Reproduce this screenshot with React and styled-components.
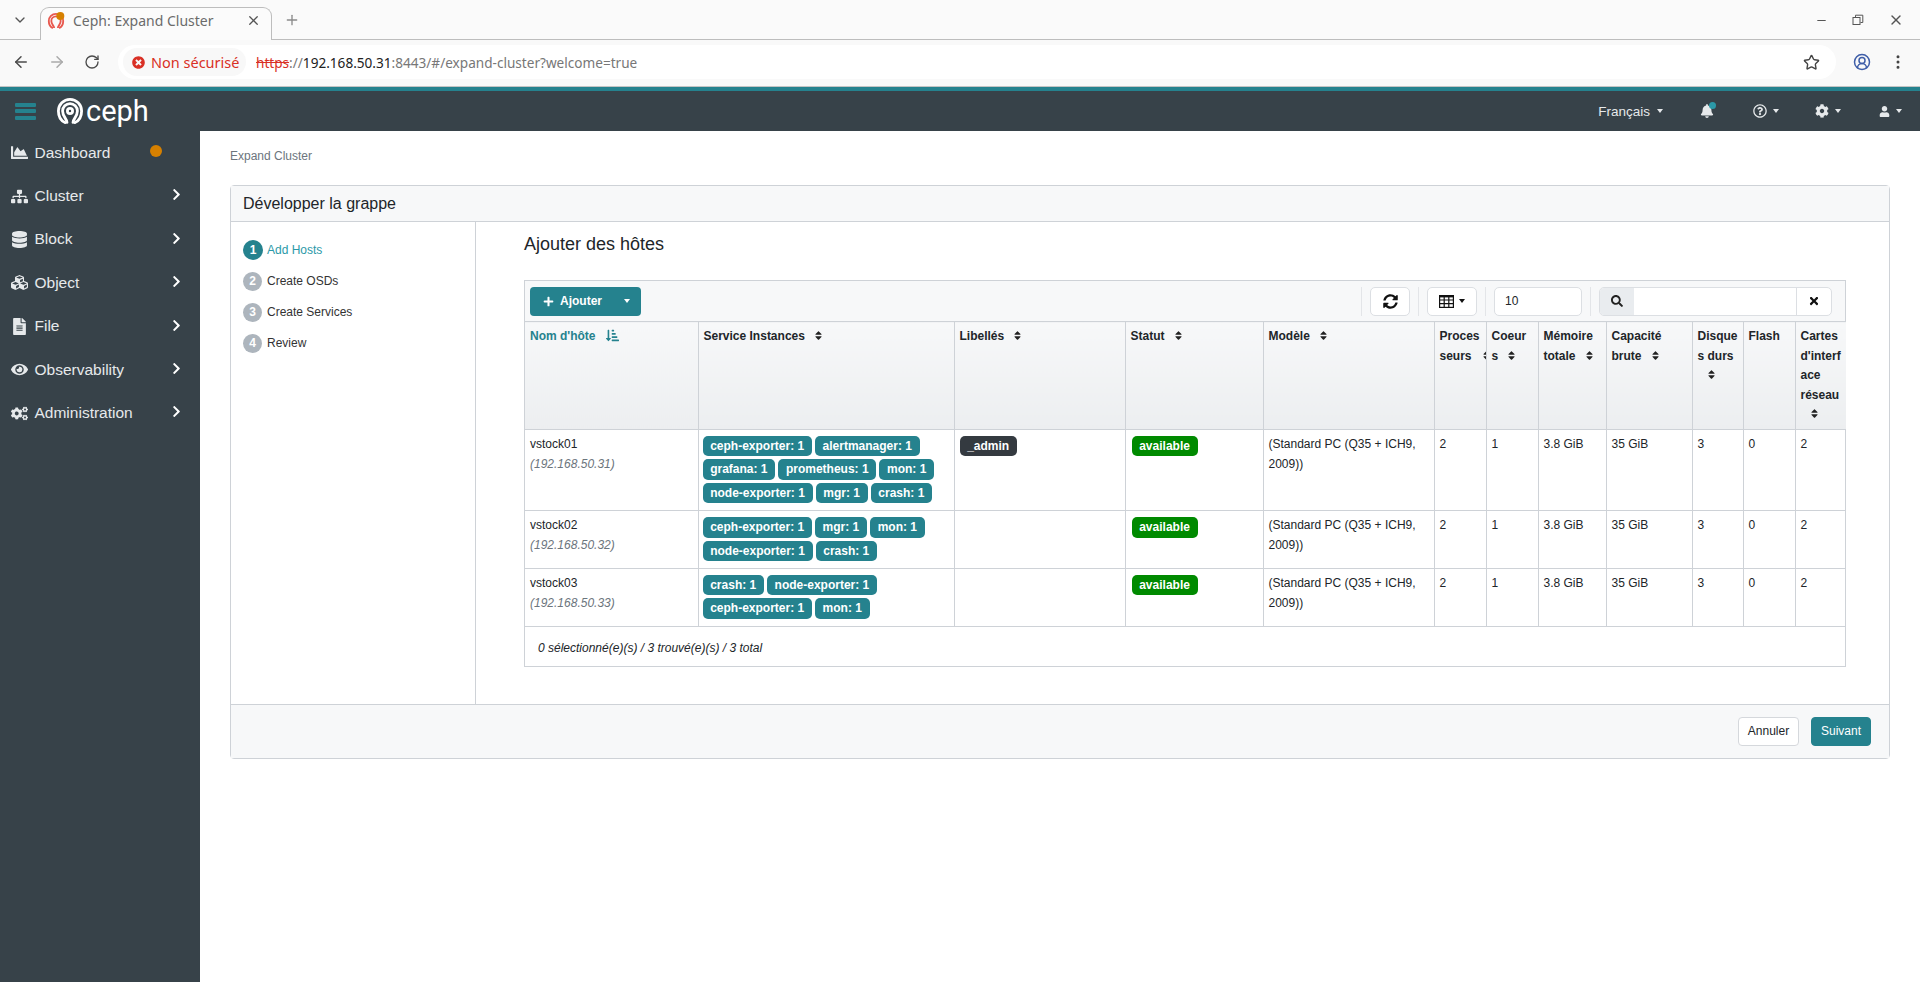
import React from 'react'
import styled, { createGlobalStyle } from 'styled-components'
import {
  FaChartArea, FaSitemap, FaDatabase, FaCubes, FaFileAlt, FaEye, FaCogs, FaChevronRight,
  FaBell, FaRegQuestionCircle, FaCog, FaUser, FaPlus, FaSort, FaSortAmountDownAlt,
  FaSyncAlt, FaSearch, FaTimes, FaTimesCircle,
} from 'react-icons/fa'
import { ArrowLeft, ArrowRight, RotateCw, Star, CircleUserRound, EllipsisVertical, ChevronDown, Plus, X, Minus } from 'lucide-react'

const teal = '#25828e'
const dark = '#374249'
const line = '#ced2d7'

const GlobalStyle = createGlobalStyle`
  html, body { margin: 0; padding: 0; background: #fff; }
  body { font-family: "Liberation Sans", Arial, sans-serif; font-size: 12px; color: #212529; }
  * { box-sizing: border-box; }
`

const Page = styled.div`
  height: 982px;
  display: flex;
  flex-direction: column;
  overflow: hidden;
`

/* browser chrome */
const TabStrip = styled.div`
  height: 39px;
  background: #fafafa;
  display: flex;
  align-items: flex-end;
  padding-left: 40px;
  position: relative;
  font-family: "Noto Sans", sans-serif;
`

const TabListButton = styled.div`
  position: absolute;
  left: 12px;
  top: 12px;
  color: #555;
  display: flex;
`

const Tab = styled.div`
  width: 232px;
  height: 33px;
  margin-bottom: -1px;
  border: 1px solid #bdbdbd;
  border-bottom: none;
  border-radius: 9px 9px 0 0;
  background: #fbfbfb;
  display: flex;
  align-items: center;
  padding: 0 10px 7px 7px;
  font-size: 14px;
  color: #6b6b6b;
  position: relative;
  z-index: 1;
`

const TabTitle = styled.span`
  margin-left: 9px;
  flex: 1;
  white-space: nowrap;
`

const NewTab = styled.div`
  margin: 0 0 11px 12px;
  color: #8a8a8a;
  display: flex;
`

const WindowControls = styled.div`
  margin-left: auto;
  display: flex;
  align-items: center;
  gap: 24px;
  padding: 0 16px 11px 0;
  color: #555;
`

const RestoreIcon = styled.div`
  width: 12px;
  height: 12px;
  display: flex;
`

const UrlBar = styled.div`
  height: 48px;
  background: #f9f9f9;
  border-top: 1px solid #bdbdbd;
  border-bottom: 1px solid #c4c4c4;
  display: flex;
  align-items: center;
  padding: 0 0 2px 12px;
  font-family: "Noto Sans", sans-serif;
`

const NavIcon = styled.div`
  width: 36px;
  height: 24px;
  margin-right: ${p => p.$gap || 0}px;
  display: flex;
  align-items: center;
  justify-content: flex-start;
  color: ${p => p.$muted ? '#aaa' : '#4b4b4b'};
`

const Omnibox = styled.div`
  width: 1718px;
  flex: none;
  height: 34px;
  margin-left: -4px;
  border-radius: 17px;
  background: #fff;
  display: flex;
  align-items: center;
  padding: 0 16px 0 5px;
  font-size: 13.6px;
`

const SecurityChip = styled.div`
  height: 28px;
  width: 123px;
  border-radius: 14px;
  background: #f8f8f8;
  display: flex;
  align-items: center;
  gap: 6px;
  padding-left: 9px;
  font-size: 14.5px;
  color: #d93025;
  white-space: nowrap;
`

const Url = styled.div`
  margin-left: 10px;
  flex: 1;
  color: #777;
  white-space: nowrap;
  s { color: #d93025; }
  b { color: #222; font-weight: 400; }
`

const ToolbarRight = styled.div`
  margin-left: 17px;
  display: flex;
  align-items: center;
  gap: 18px;
`

/* ceph navbar */
const AccentLine = styled.div`
  height: 4px;
  background: ${teal};
`

const Navbar = styled.header`
  height: 40px;
  background: ${dark};
  display: flex;
  align-items: center;
  padding-left: 15px;
  color: #e6e9eb;
`

const Burger = styled.div`
  width: 21px;
  height: 17px;
  display: flex;
  flex-direction: column;
  justify-content: space-between;
  span {
    height: 4px;
    background: ${teal};
    border-radius: 1px;
  }
`

const Brand = styled.div`
  display: flex;
  align-items: center;
  margin-left: 21px;
  color: #fff;
  font-family: Roboto, sans-serif;
  font-weight: 400;
  font-size: 29px;
  line-height: 40px;
  gap: 3px;
`

const NavActions = styled.div`
  margin-left: auto;
  display: flex;
  align-items: center;
  padding-right: 18px;
`

const NavAction = styled.div`
  display: flex;
  align-items: center;
  margin-left: ${p => p.$left}px;
  gap: ${p => p.$gap || 6}px;
  font-size: 13.5px;
  position: relative;
`

const Caret = styled.i`
  display: inline-block;
  width: 0;
  height: 0;
  border-top: 4px solid currentColor;
  border-left: 3.5px solid transparent;
  border-right: 3.5px solid transparent;
`

const BellDot = styled.i`
  position: absolute;
  left: 9px;
  top: -2px;
  width: 7px;
  height: 7px;
  border-radius: 50%;
  background: #2b99a8;
`

/* sidebar */
const Body = styled.div`
  flex: 1;
  display: flex;
  min-height: 0;
`

const Sidebar = styled.nav`
  width: 200px;
  background: ${dark};
  flex: none;
  color: #e6e9eb;
`

const SideItem = styled.div`
  height: 43.4px;
  display: flex;
  align-items: center;
  padding-left: 11px;
  font-size: 15.5px;
  position: relative;
`

const SideIcon = styled.span`
  width: 23.5px;
  display: flex;
  flex: none;
`

const SideChevron = styled.span`
  position: absolute;
  left: 170px;
  top: 14px;
  display: flex;
  color: #fff;
`

const StatusDot = styled.i`
  position: absolute;
  left: 150px;
  top: 14px;
  width: 12px;
  height: 12px;
  border-radius: 50%;
  background: #d68000;
`

/* main */
const Main = styled.main`
  flex: 1;
  padding: 16px 30px 0;
  min-width: 0;
`

const Breadcrumb = styled.div`
  line-height: 18px;
  margin-bottom: 20px;
  color: #6c757d;
`

const Card = styled.section`
  border: 1px solid ${line};
  border-radius: 4px;
`

const CardHeader = styled.div`
  height: 36px;
  background: #f7f8f9;
  border-bottom: 1px solid ${line};
  display: flex;
  align-items: center;
  padding-left: 12px;
  font-size: 16px;
`

const CardBody = styled.div`
  display: flex;
`

const Wizard = styled.div`
  width: 245px;
  flex: none;
  border-right: 1px solid ${line};
  padding: 17px 12px 0;
  display: flex;
  flex-direction: column;
  gap: 11px;
`

const Step = styled.div`
  height: ${p => p.$active ? 21 : 20}px;
  display: flex;
  align-items: center;
  gap: ${p => p.$active ? 4 : 5}px;
  color: ${p => p.$active ? '#2b99a8' : '#333'};
`

const StepNumber = styled.span`
  width: ${p => p.$active ? 20 : 19}px;
  height: ${p => p.$active ? 20 : 19}px;
  border-radius: 50%;
  background: ${p => p.$active ? teal : '#adb5bd'};
  color: #fff;
  font-weight: 700;
  display: flex;
  align-items: center;
  justify-content: center;
`

const Content = styled.div`
  flex: 1;
  min-width: 0;
  padding: 11px 43px 37px 48px;
`

const Title = styled.h3`
  margin: 0 0 25px;
  font-size: 18px;
  font-weight: 400;
  line-height: 22px;
`

const DataTableBox = styled.div`
  border: 1px solid ${line};
`

const TableToolbar = styled.div`
  height: 40px;
  background: #f7f8f9;
  display: flex;
  align-items: center;
  padding: 0 5px;
`

const SplitButton = styled.div`
  width: 111px;
  height: 29px;
  border-radius: 4px;
  background: ${teal};
  color: #fff;
  font-weight: 700;
  display: flex;
  align-items: center;
  padding-left: 13px;
  gap: 6px;
  i { margin-left: 16px; }
`

const ToolGroup = styled.div`
  display: flex;
  align-items: center;
  height: 29px;
  padding: 0 8px;
  border-left: 1px solid #e3e5e8;
  margin-left: ${p => p.$auto ? 'auto' : '0'};
`

const ToolButton = styled.div`
  height: 29px;
  width: ${p => p.$width}px;
  border: 1px solid #dcdfe3;
  border-radius: 5px;
  background: #fff;
  color: #111;
  display: flex;
  align-items: center;
  justify-content: center;
  gap: 5px;
`

const LimitInput = styled.div`
  width: 88px;
  height: 29px;
  border: 1px solid #dcdfe3;
  border-radius: 5px;
  background: #fff;
  display: flex;
  align-items: center;
  padding-left: 10px;
`

const SearchGroup = styled.div`
  width: 233px;
  height: 29px;
  border: 1px solid #dcdfe3;
  border-radius: 5px;
  background: #fff;
  display: flex;
  overflow: hidden;
`

const SearchAddon = styled.div`
  width: 34px;
  background: #e9ecef;
  display: flex;
  align-items: center;
  justify-content: center;
  color: #222;
`

const SearchClear = styled.div`
  margin-left: auto;
  width: 35px;
  border-left: 1px solid #dcdfe3;
  display: flex;
  align-items: center;
  justify-content: center;
  color: #111;
`

const HostTable = styled.table`
  width: 100%;
  table-layout: fixed;
  border-collapse: collapse;
`

const HeadCell = styled.th`
  height: 108px;
  padding: 5px 5px 0;
  vertical-align: top;
  text-align: left;
  font-weight: 700;
  line-height: 19.5px;
  color: ${p => p.$sorted ? teal : '#212529'};
  background: linear-gradient(#f7f8f9, #eceef0);
  border: 1px solid ${line};
  border-left: ${p => p.$first ? 'none' : `1px solid ${line}`};
  border-right: ${p => p.$last ? 'none' : `1px solid ${line}`};
  overflow: hidden;
  overflow-wrap: anywhere;
`

const SortIcon = styled.span`
  display: inline-block;
  margin-left: ${p => p.$tuck ? 9.5 : 8}px;
  margin-right: ${p => p.$tuck ? '-18px' : '0'};
  font-size: 11px;
  vertical-align: -1px;
  color: #222;
`

const SortedIcon = styled.span`
  display: inline-block;
  margin-left: 10px;
  vertical-align: -2px;
  color: ${teal};
`

const Cell = styled.td`
  padding: 4px 5px 0;
  vertical-align: top;
  line-height: 20px;
  border: 1px solid ${line};
  border-left: ${p => p.$first ? 'none' : `1px solid ${line}`};
  border-right: ${p => p.$last ? 'none' : `1px solid ${line}`};
`

const BadgeCell = styled(Cell)`
  padding: 6px 4px 7px ${p => p.$left}px;
`

const Ip = styled.div`
  color: #6c757d;
  font-style: italic;
`

const Badges = styled.div`
  display: flex;
  flex-wrap: wrap;
  gap: 3px;
`

const Badge = styled.span`
  height: 20.4px;
  padding: 0 7.7px;
  border-radius: 5px;
  font-weight: 700;
  color: #fff;
  line-height: 20.4px;
  white-space: nowrap;
  background: ${p => p.$bg};
`

const TableFooter = styled.div`
  height: 39px;
  display: flex;
  align-items: center;
  padding: 3px 0 0 13px;
  font-style: italic;
`

const CardFooter = styled.div`
  height: 54px;
  background: #f7f8f9;
  border-top: 1px solid ${line};
  display: flex;
  align-items: center;
  justify-content: flex-end;
  gap: 12px;
  padding-right: 18px;
`

const Button = styled.div`
  height: 29px;
  width: ${p => p.$width}px;
  border-radius: 4px;
  display: flex;
  align-items: center;
  justify-content: center;
  background: ${p => p.$primary ? teal : '#fff'};
  color: ${p => p.$primary ? '#fff' : '#212529'};
  border: 1px solid ${p => p.$primary ? teal : '#d5d8dc'};
`

const sideItems = [
  { label: 'Dashboard', icon: FaChartArea, dot: true },
  { label: 'Cluster', icon: FaSitemap },
  { label: 'Block', icon: FaDatabase },
  { label: 'Object', icon: FaCubes },
  { label: 'File', icon: FaFileAlt },
  { label: 'Observability', icon: FaEye },
  { label: 'Administration', icon: FaCogs },
]

const steps = ['Add Hosts', 'Create OSDs', 'Create Services', 'Review']

const columns = [
  { label: "Nom d'hôte", width: 173, sorted: true },
  { label: 'Service Instances', width: 256 },
  { label: 'Libellés', width: 171 },
  { label: 'Statut', width: 138 },
  { label: 'Modèle', width: 171 },
  { label: 'Processeurs', width: 52, tuck: true },
  { label: 'Coeurs', width: 52 },
  { label: 'Mémoire totale', width: 68 },
  { label: 'Capacité brute', width: 86 },
  { label: 'Disques durs', width: 51 },
  { label: 'Flash', width: 52, noSort: true },
  { label: "Cartes d'interface réseau", width: 51 },
]

const hosts = [
  {
    name: 'vstock01',
    ip: '192.168.50.31',
    services: ['ceph-exporter: 1', 'alertmanager: 1', 'grafana: 1', 'prometheus: 1', 'mon: 1', 'node-exporter: 1', 'mgr: 1', 'crash: 1'],
    label: '_admin',
  },
  {
    name: 'vstock02',
    ip: '192.168.50.32',
    services: ['ceph-exporter: 1', 'mgr: 1', 'mon: 1', 'node-exporter: 1', 'crash: 1'],
  },
  {
    name: 'vstock03',
    ip: '192.168.50.33',
    services: ['crash: 1', 'node-exporter: 1', 'ceph-exporter: 1', 'mon: 1'],
  },
]

function CephLogo() {
  return (
    <svg width="26" height="26" viewBox="0 0 26 26" fill="none" stroke="#fff" strokeWidth="2.8" strokeLinecap="round">
      <path d="M8 24.6C3.8 22.6 1.4 18.2 1.4 13a11.6 11.6 0 0 1 23.2 0c0 5.2-2.4 9.6-6.6 11.6" />
      <path d="M10 24.4c0-3.6-4.4-5.6-4.4-11.4a7.4 7.4 0 0 1 14.8 0c0 5.8-4.4 7.8-4.4 11.4" />
      <circle cx="13" cy="13" r="2.6" />
    </svg>
  )
}

function GridIcon() {
  return (
    <svg width="15" height="13" viewBox="0 0 15 13" fill="none" stroke="#111" strokeWidth="1.2">
      <rect x="0.6" y="0.6" width="13.8" height="11.8" />
      <path d="M0.6 1.4h13.8" strokeWidth="2" />
      <path d="M0.6 5h13.8M0.6 8.7h13.8M5.2 1v11M9.8 1v11" />
    </svg>
  )
}

function App() {
  return (
    <Page>
      <GlobalStyle />
      <TabStrip>
        <TabListButton><ChevronDown size={16} /></TabListButton>
        <Tab>
          <svg width="16" height="16" viewBox="0 0 26 26" style={{ overflow: 'visible' }}>
            <g fill="none" stroke="#e8594f" strokeWidth="3">
              <path d="M8 24.6C3.8 22.6 1.3 18.2 1.3 13a11.7 11.7 0 0 1 23.4 0c0 5.2-2.5 9.6-6.7 11.6" />
              <path d="M10 24.4c0-3.6-4.6-5.6-4.6-11.4a7.6 7.6 0 0 1 15.2 0c0 5.8-4.6 7.8-4.6 11.4" />
            </g>
            <circle cx="20" cy="5" r="6.5" fill="#d68000" />
          </svg>
          <TabTitle>Ceph: Expand Cluster</TabTitle>
          <X size={15} color="#555" />
        </Tab>
        <NewTab><Plus size={16} /></NewTab>
        <WindowControls>
          <Minus size={13} />
          <RestoreIcon>
            <svg width="12" height="12" viewBox="0 0 12 12" fill="none" stroke="#555" strokeWidth="1">
              <rect x="1" y="3.5" width="7" height="7" />
              <path d="M3.5 3V1.2h7.3v7.3H8.5" />
            </svg>
          </RestoreIcon>
          <X size={16} />
        </WindowControls>
      </TabStrip>
      <UrlBar>
        <NavIcon><ArrowLeft size={18} /></NavIcon>
        <NavIcon $muted><ArrowRight size={18} /></NavIcon>
        <NavIcon $gap={2}><RotateCw size={16} /></NavIcon>
        <Omnibox>
          <SecurityChip>
            <FaTimesCircle size={13} />
            Non sécurisé
          </SecurityChip>
          <Url><s>https</s>://<b>192.168.50.31</b>:8443/#/expand-cluster?welcome=true</Url>
          <Star size={17} color="#444" />
        </Omnibox>
        <ToolbarRight>
          <CircleUserRound size={18} color="#3f5ea8" />
          <EllipsisVertical size={18} color="#444" />
        </ToolbarRight>
      </UrlBar>
      <AccentLine />
      <Navbar>
        <Burger><span /><span /><span /></Burger>
        <Brand>
          <CephLogo />
          ceph
        </Brand>
        <NavActions>
          <NavAction $left={0} $gap={7}>Français <Caret /></NavAction>
          <NavAction $left={37}><FaBell size={14} /><BellDot /></NavAction>
          <NavAction $left={39}><FaRegQuestionCircle size={14} /><Caret /></NavAction>
          <NavAction $left={36}><FaCog size={14} /><Caret /></NavAction>
          <NavAction $left={38}><FaUser size={11} /><Caret /></NavAction>
        </NavActions>
      </Navbar>
      <Body>
        <Sidebar>
          {sideItems.map(({ label, icon: Icon, dot }) => (
            <SideItem key={label}>
              <SideIcon><Icon size={17} /></SideIcon>
              {label}
              {dot ? <StatusDot /> : <SideChevron><FaChevronRight size={13} /></SideChevron>}
            </SideItem>
          ))}
        </Sidebar>
        <Main>
          <Breadcrumb>Expand Cluster</Breadcrumb>
          <Card>
            <CardHeader>Développer la grappe</CardHeader>
            <CardBody>
              <Wizard>
                {steps.map((step, i) => (
                  <Step key={step} $active={i === 0}>
                    <StepNumber $active={i === 0}>{i + 1}</StepNumber>
                    {step}
                  </Step>
                ))}
              </Wizard>
              <Content>
                <Title>Ajouter des hôtes</Title>
                <DataTableBox>
                  <TableToolbar>
                    <SplitButton>
                      <FaPlus size={11} />
                      Ajouter
                      <Caret />
                    </SplitButton>
                    <ToolGroup $auto><ToolButton $width={40}><FaSyncAlt size={15} /></ToolButton></ToolGroup>
                    <ToolGroup><ToolButton $width={50}><GridIcon /><Caret /></ToolButton></ToolGroup>
                    <ToolGroup><LimitInput>10</LimitInput></ToolGroup>
                    <ToolGroup>
                      <SearchGroup>
                        <SearchAddon><FaSearch size={12} /></SearchAddon>
                        <SearchClear><FaTimes size={12} /></SearchClear>
                      </SearchGroup>
                    </ToolGroup>
                  </TableToolbar>
                  <HostTable>
                    <colgroup>
                      {columns.map(c => <col key={c.label} style={{ width: c.width }} />)}
                    </colgroup>
                    <thead>
                      <tr>
                        {columns.map((c, i) => (
                          <HeadCell key={c.label} $sorted={c.sorted} $first={i === 0} $last={i === columns.length - 1}>
                            {c.label}
                            {c.sorted && <SortedIcon><FaSortAmountDownAlt size={13} /></SortedIcon>}
                            {!c.sorted && !c.noSort && <SortIcon $tuck={c.tuck}><FaSort /></SortIcon>}
                          </HeadCell>
                        ))}
                      </tr>
                    </thead>
                    <tbody>
                      {hosts.map(h => (
                        <tr key={h.name}>
                          <Cell $first>
                            {h.name}
                            <Ip>({h.ip})</Ip>
                          </Cell>
                          <BadgeCell $left={4}>
                            <Badges>
                              {h.services.map(s => <Badge key={s} $bg={teal}>{s}</Badge>)}
                            </Badges>
                          </BadgeCell>
                          <BadgeCell $left={5}>
                            <Badges>{h.label && <Badge $bg="#343a40">{h.label}</Badge>}</Badges>
                          </BadgeCell>
                          <BadgeCell $left={6}>
                            <Badges><Badge $bg="#008a00">available</Badge></Badges>
                          </BadgeCell>
                          <Cell>(Standard PC (Q35 + ICH9, 2009))</Cell>
                          <Cell>2</Cell>
                          <Cell>1</Cell>
                          <Cell>3.8 GiB</Cell>
                          <Cell>35 GiB</Cell>
                          <Cell>3</Cell>
                          <Cell>0</Cell>
                          <Cell $last>2</Cell>
                        </tr>
                      ))}
                    </tbody>
                  </HostTable>
                  <TableFooter>0 sélectionné(e)(s) / 3 trouvé(e)(s) / 3 total</TableFooter>
                </DataTableBox>
              </Content>
            </CardBody>
            <CardFooter>
              <Button $width={61}>Annuler</Button>
              <Button $primary $width={60}>Suivant</Button>
            </CardFooter>
          </Card>
        </Main>
      </Body>
    </Page>
  )
}

export default App
